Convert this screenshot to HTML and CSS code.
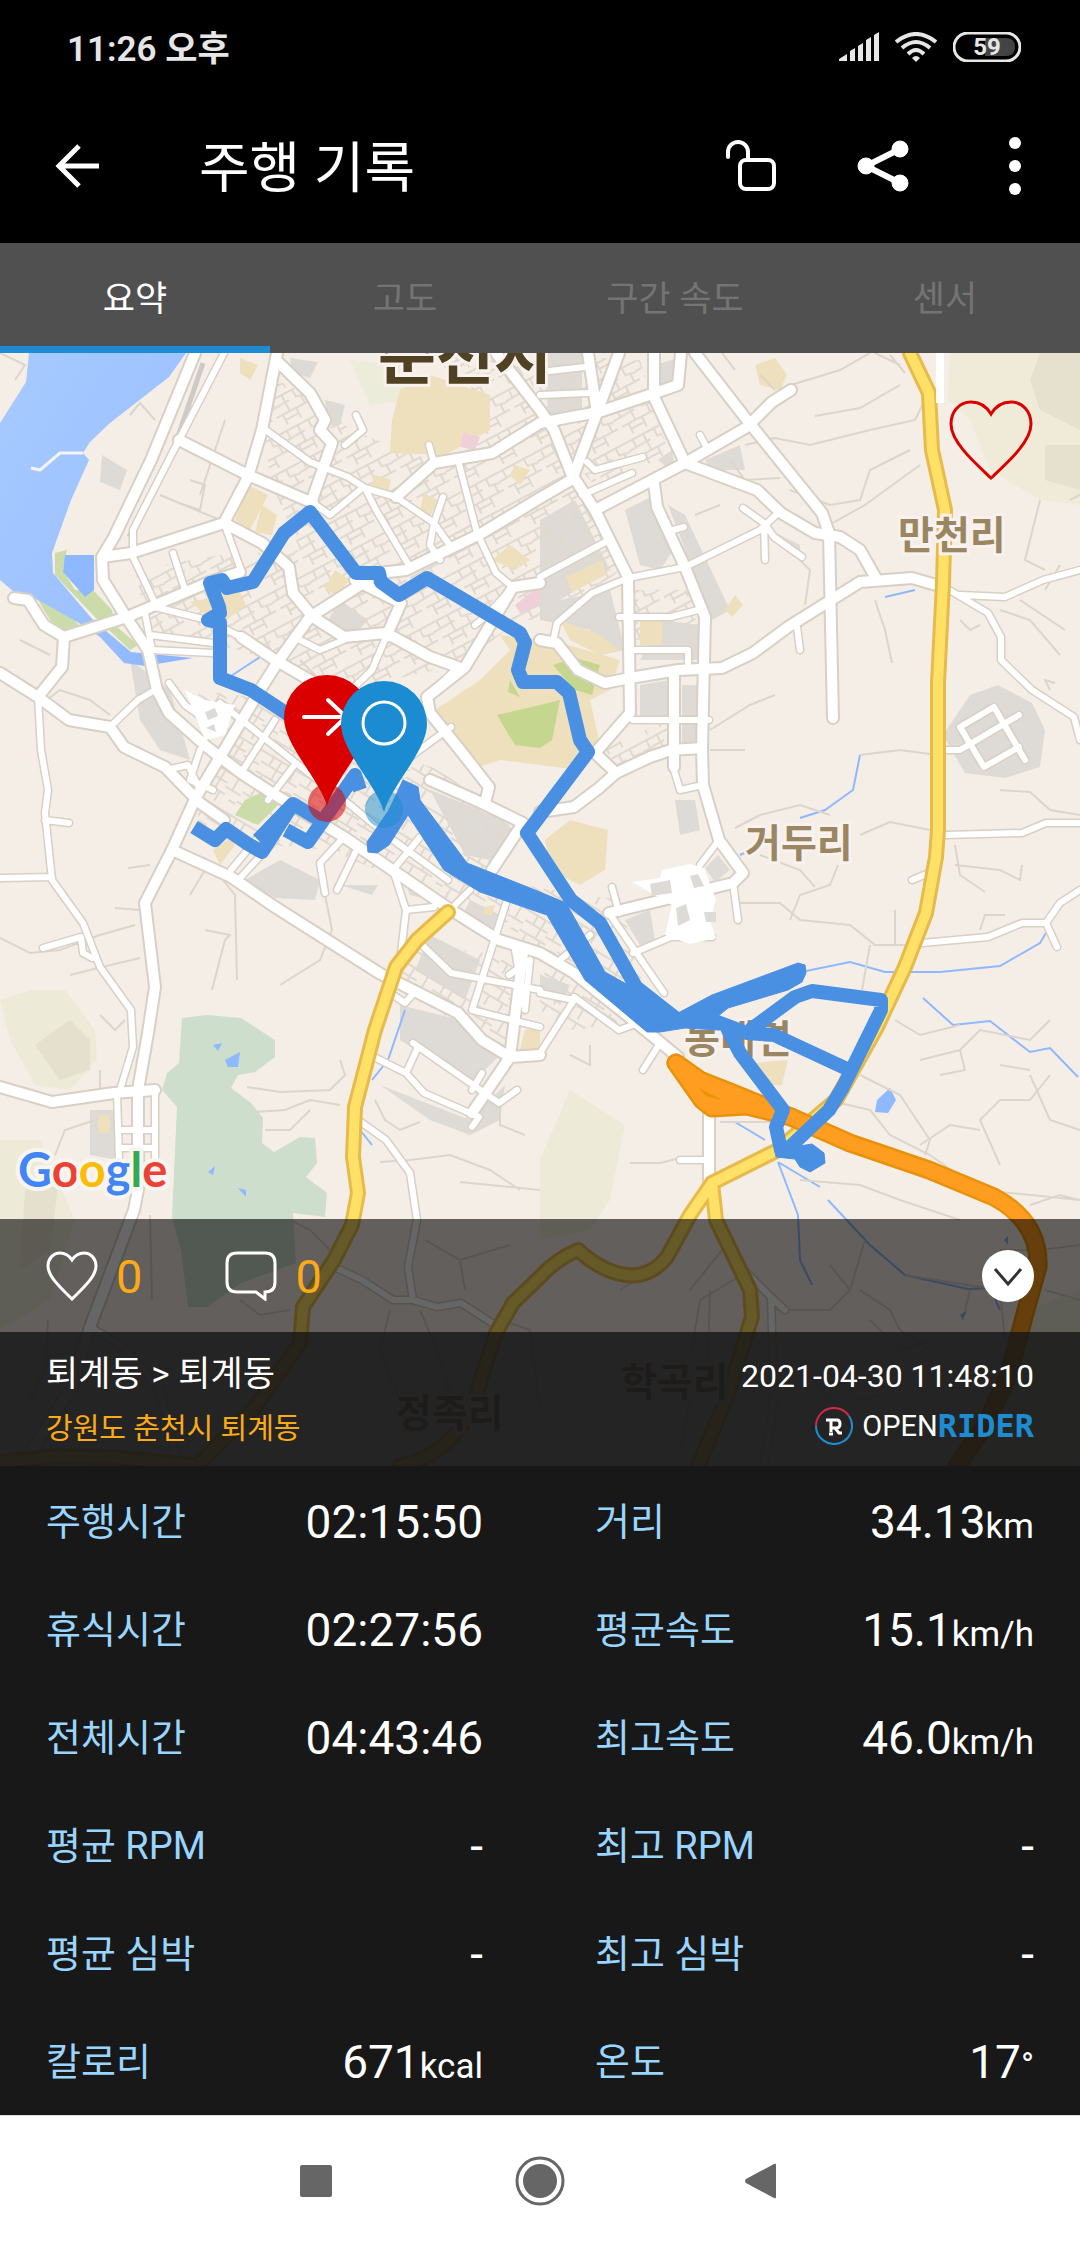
FILE: index.html
```html
<!DOCTYPE html>
<html lang="ko">
<head>
    <meta charset="UTF-8">
    <meta name="viewport" content="width=device-width, initial-scale=1.0">
    <title>주행 기록</title>
    <link rel="stylesheet" href="styles.css">
</head>
<body>

    <div class="status-bar">
        <span class="clock">11:26 오후</span>
        <div class="status-icons">
            <svg width="40" height="30" viewBox="0 0 40 30" fill="#e6e6e6">
                <path d="M0 27 8 22V29H0ZM11 19 16 16V29H11ZM19 14 24 11V29H19ZM27 8 32 5V29H27ZM35 3 40 0V29H35Z"/>
            </svg>
            <svg width="42" height="30" viewBox="0 0 42 30" fill="none" stroke="#e6e6e6" stroke-width="4">
                <path d="M1 10Q21-6 41 10M7 16Q21 4 35 16M13 22Q21 14 29 22"/>
                <path d="M17 26Q21 22 25 26L21 30Z" fill="#e6e6e6" stroke="none"/>
            </svg>
            <svg class="battery" width="68" height="30" viewBox="0 0 68 30">
                <path d="M32 6H53Q62 6 62 15T53 24H32Z" fill="#444"/>
                <rect x="1" y="1" width="66" height="28" rx="14" fill="none" stroke="#e6e6e6" stroke-width="3"/>
                <text x="34" y="23" text-anchor="middle">59</text>
            </svg>
        </div>
    </div>

    <header class="app-bar">
        <button type="button" class="icon-btn" aria-label="뒤로">
            <svg width="44" height="44" viewBox="0 0 44 44" fill="none" stroke="#fff" stroke-width="5">
                <path d="M24 2 4 22 24 42M3 22H44"/>
            </svg>
        </button>
        <h1>주행 기록</h1>
        <div class="app-actions">
            <button type="button" class="icon-btn" aria-label="공개">
                <svg width="50" height="52" viewBox="0 0 50 52" fill="none" stroke="#fff" stroke-width="4" stroke-linecap="round">
                    <path d="M2 17V12A10 10 0 0 1 22 12V20"/>
                    <rect x="14" y="20" width="34" height="29" rx="6"/>
                </svg>
            </button>
            <button type="button" class="icon-btn" aria-label="공유">
                <svg width="52" height="52" viewBox="0 0 52 52" fill="#fff" stroke="#fff">
                    <path d="M43 9 9 26 43 43" fill="none" stroke-width="6"/>
                    <circle cx="43" cy="9" r="8"/>
                    <circle cx="9" cy="26" r="8"/>
                    <circle cx="43" cy="43" r="8"/>
                </svg>
            </button>
            <button type="button" class="icon-btn" aria-label="더보기">
                <svg width="12" height="60" viewBox="0 0 12 60" fill="#fff">
                    <circle cx="6" cy="7" r="6"/>
                    <circle cx="6" cy="30" r="6"/>
                    <circle cx="6" cy="53" r="6"/>
                </svg>
            </button>
        </div>
    </header>

    <nav class="tabs">
        <button type="button" class="tab active">요약</button>
        <button type="button" class="tab">고도</button>
        <button type="button" class="tab">구간 속도</button>
        <button type="button" class="tab">센서</button>
    </nav>

    <section class="map">
        <svg class="map-canvas" viewBox="0 353 1080 1113">
            <defs>
                <linearGradient id="lake" x1="0" y1="0" x2="1" y2="1">
                    <stop offset="0" stop-color="#a6caff"/>
                    <stop offset="0.6" stop-color="#9dc2ff"/>
                    <stop offset="1" stop-color="#8ab4ff"/>
                </linearGradient>
                <pattern id="blocks" width="43" height="34" patternUnits="userSpaceOnUse" patternTransform="rotate(-28)">
                    <path d="M0 5H43M0 14 24 13M5 23H43M8 5V14M20 5V23M32 5V13L43 15M12 23V34M27 23V34M37 15V23M12 29H27" fill="none" stroke="#dfd9d0" stroke-width="2"/>
                </pattern>
                <pattern id="blocks-south" width="44" height="36" patternUnits="userSpaceOnUse" patternTransform="rotate(31)">
                    <path d="M0 4H44M0 14H26M9 4V14M18 4V24M34 4V18M26 18H44M0 25H30M24 25V36M8 25V36M36 28H44" fill="none" stroke="#dfd9d0" stroke-width="2"/>
                </pattern>

                <!-- wide streets -->
                <g id="streets-wide">
                    <path d="M195 353 151 460 114 537 102 557 103 580 126 617 148 650 157 690 169 713 207 747 241 773 272 793 344 837 448 908 499 940 540 953 574 973 633 1020 678 1057"/>
                    <path d="M277 353 262 430 248 477 224 523 131 553 103 557"/>
                    <path d="M179 440 248 475 313 503M279 363 310 393 325 420 320 430 332 443 312 500"/>
                    <path d="M571 480 540 498 482 533 406 570 379 573 310 617 279 660 260 690 220 757 196 797 172 850 145 903 155 987 148 1033 138 1090 138 1190 134 1210 90 1327 72 1387 34 1447"/>
                    <path d="M540 583 513 587 465 667 427 697 430 713 460 750 489 787 485 803"/>
                    <path d="M496 353 540 410 554 430 571 473 595 510 628 577 630 713 595 753 616 773 599 788 574 807 540 812"/>
                    <path d="M14 598 28 600 44 625 64 637 127 617 207 583 240 572M64 637 62 667 38 697 0 673M38 697 69 720 110 727 124 747 165 767 200 803 224 820"/>
                    <path d="M224 523 262 543 289 567 293 593 313 617 344 637 386 633 430 657 458 667"/>
                    <path d="M434 463 492 453 540 423 571 417 599 412 655 393 678 385 681 353M396 497 434 463"/>
                    <path d="M588 353 597 413 573 477M619 353 597 413M654 353 654 397 685 463 757 490 781 513 815 533 840 537 860 550 877 580"/>
                    <path d="M695 353 747 420 822 513 829 533 833 718"/>
                    <path d="M595 510 685 463 747 427 772 402 791 390M654 483 657 507 685 567 705 617 702 750 703 785 719 840 743 873 733 883 609 913"/>
                    <path d="M540 640 557 643 578 670 605 683 630 678 678 670 722 668 753 653 788 627 860 582 912 578 936 585"/>
                    <path d="M616 773 650 757 671 750 702 748M674 677 674 767"/>
                    <path d="M172 850 231 877 275 907 379 973 458 1013 482 1040 510 1057 540 1055"/>
                    <path d="M0 1087 52 1102 114 1093 155 1090"/>
                    <path d="M430 780 482 803 523 823 492 870M241 637 275 660 327 690 360 720"/>
                    <path d="M523 953 510 1057 472 1113M709 1103 709 1180"/>
                    <path d="M355 580 401 603 386 637"/>
                </g>

                <!-- narrow streets -->
                <g id="streets">
                    <path d="M224 353 179 440 133 530 133 557 155 603M173 553 185 590 207 583M224 523 241 570M263 428 310 462 348 477 365 488 396 497 434 523 451 547"/>
                    <path d="M365 488 376 510 410 567M458 460 477 533 496 573 513 587 487 615 475 625M434 523 430 545 440 560M313 503 330 515 360 490M345 445 363 430 356 415M434 463 429 445M443 497 434 523"/>
                    <path d="M145 613 152 650 213 653M150 635 213 643M155 607 207 620 241 637M386 637 372 670 344 697M300 640 320 650 344 640M458 667 427 697"/>
                    <path d="M110 727 138 700 155 690M38 697 41 750 48 790 45 813 52 880 83 923 100 967 131 1010 133 1047 120 1090M0 878 52 877M45 820 69 823M43 948 81 937 83 953 92 958"/>
                    <path d="M220 703 296 763 344 800 389 837 448 880M169 683 185 705 220 730M241 773 275 720M296 763 268 800M410 757 451 727M200 750 190 780 213 790M166 770 188 765 200 790"/>
                    <path d="M540 577 609 540M628 578 685 567 760 530 778 513M743 508 764 523 774 537 802 557M764 523 765 560M554 637 557 623 592 593 628 578M619 617 671 617 698 610M633 650 688 650 688 668M633 720 709 720M673 530 684 527M540 395 588 393M540 372 585 367M587 462 595 470 643 457M582 495 632 473M797 627 800 650M700 435 708 450"/>
                    <path d="M946 588 988 613 1001 637 1001 660 1032 690 1074 717 1080 740M960 595 1005 597 1043 580 1080 570"/>
                    <path d="M943 750 960 750 1019 715M960 727 994 707 1025 760M960 727 984 767 1019 747"/>
                    <path d="M420 943 451 973 540 990M506 903 472 1010 540 1027M374 1057 406 1073 424 1093 479 1117 472 1127M413 1043 499 1103 517 1090M418 1047 406 1073M482 1073 472 1090M393 995 405 1003 412 995"/>
                    <path d="M358 1120 386 1140 410 1173 417 1220 408 1267 413 1300 393 1300 362 1280 334 1267M413 1300 437 1307 461 1303 492 1323"/>
                    <path d="M117 1093 119 1160M155 1090 155 1160M119 1130 155 1130M119 1148 155 1148M355 853 337 890M320 863 325 893M393 870 406 910 401 953M406 910 434 907M393 870 420 837M241 877 275 840M231 870 260 835M320 863 344 837"/>
                    <path d="M574 997 619 1030 633 1025M540 993 574 1000 540 1053M660 1043 643 1070M609 913 664 993M612 887 619 913M633 953 671 937 712 937M733 883 738 920M719 840 700 865M674 770 680 790 703 785M560 960 590 935M709 1160 680 1160"/>
                    <path d="M946 835 1022 833 1046 823 1080 823M922 943 988 937 1022 923 1046 923 1060 903 1080 890M1046 923 1057 947M912 880 929 873"/>
                    <path d="M747 1273 771 1297 774 1400 764 1466M771 1297 785 1310M90 1327 124 1347 160 1390 178 1466M509 975 530 960 525 1010 515 950M470 890 448 912 460 900"/>
                </g>

                <!-- yellow trunk roads -->
                <g id="trunk">
                    <path d="M910 353 929 393 932 450 945 510 943 583 938 683 938 830 936 857 926 913 905 967 877 1027 836 1100 778 1150 712 1183 690 1215 667 1257Q650 1278 626 1275T578 1250Q555 1260 540 1277L513 1303 496 1333 472 1407Q450 1455 400 1466"/>
                    <path d="M712 1183 716 1220 750 1290 752 1317 726 1400 698 1466"/>
                    <path d="M448 912 417 940 396 967 375 1030 355 1107 353 1157 358 1193 352 1225 334 1260 303 1307 300 1343 255 1407 200 1463M0 1462 60 1456 120 1458 200 1466"/>
                </g>

                <g id="motorway">
                    <path d="M676 1063 702 1100 712 1108 747 1106 791 1117 850 1143 929 1170 994 1197Q1040 1222 1038 1267L1026 1310 1008 1377 984 1427 957 1466"/>
                    <path d="M676 1063 700 1080 733 1093 791 1117M690 1075 705 1096 735 1102"/>
                </g>
            </defs>

            <rect y="353" width="1080" height="1113" fill="#f5eee7"/>

            <!-- hills -->
            <path d="M950 353H1080V505L1040 500 990 470 970 420 948 400Z" fill="#efebd8"/>
            <path d="M1040 353H1080V430L1040 410 1030 380ZM1045 445H1080V490L1045 480Z" fill="#e6e1cf"/>
            <path d="M0 1000 30 990 65 990 95 1030 97 1060 70 1090 35 1085 10 1040ZM0 1140 40 1140 75 1220 50 1300 0 1330ZM570 1090 625 1125 610 1200 590 1230 540 1240 540 1160Z" fill="#eeead8"/>
            <path d="M35 1045 70 1020 90 1040 90 1070 60 1080ZM25 1190 60 1170 50 1250 20 1270Z" fill="#e5e0ce"/>
            <path d="M350 360 400 365 410 400 370 405ZM1026 1310 1080 1290V1466H970L1008 1377Z" fill="#ebecd9"/>

            <!-- built-up ground -->
            <path class="ground" d="M102 455 127 470 120 490 100 482ZM290 358 318 362 310 378 292 372ZM325 400 345 405 340 425 328 425ZM340 600 368 620 350 640 325 625ZM545 353 582 353V415H548ZM655 365 678 358 672 385 658 390ZM540 520 575 500 610 570 560 600 610 590 625 650 600 655 590 630 540 620ZM625 510 655 495 680 540 660 570 640 565ZM668 505 685 515 730 610 712 620ZM658 460 672 450 676 475ZM705 460 740 445 745 470 712 470ZM770 530 800 560 800 545ZM660 620 700 625V660H640ZM640 685 670 680V718H640ZM682 685 700 685V750H682ZM943 735 970 695 998 685 1032 703 1045 730 1040 767 1005 778 965 773Z"/>
            <path class="ground" d="M430 790 480 810 515 830 490 860 465 855ZM245 880 280 860 320 880 315 900 275 898ZM340 885 378 885 372 895ZM400 870 448 900 430 900 410 895ZM470 900 500 915 490 935 460 920ZM400 1005 460 1020 500 1055 470 1085 400 1040ZM380 1085 470 1120 505 1085 500 1120 470 1135 430 1120ZM90 1110 118 1110 118 1160 90 1155ZM540 975 570 985 560 1005 540 990ZM625 920 650 910 655 940 640 945ZM675 800 695 800 700 830 680 835ZM430 935 480 960 465 1000 415 970ZM130 660 170 690 190 760 160 750 140 720Z"/>
            <path fill="url(#blocks)" d="M265 375 320 400 350 430 430 460 540 430 595 500 620 570 560 620 520 620 460 665 340 690 240 650 150 640 135 570 220 555 300 550 270 480 265 430Z"/>
            <path fill="url(#blocks)" d="M440 355H540L640 360 650 390 590 470 530 440 440 450ZM632 590H690L700 640H635ZM600 750 668 720V750L620 770ZM590 400 650 400 670 455 600 490 580 470Z"/>
            <path fill="url(#blocks-south)" d="M190 690 280 700 350 740 440 770 520 830 490 880 620 900 650 1010 540 950 400 880 330 850 270 845 200 830 195 790 230 750ZM400 940 530 960 505 1050 400 990ZM540 960 600 1000 620 1025 570 1030 540 1010Z"/>

            <!-- schools, parks, hospitals -->
            <path fill="#eedfbd" d="M400 390 430 375 490 395 490 430 445 455 390 453 392 420ZM248 485 268 495 250 530 235 520ZM262 505 277 515 272 535 255 532ZM375 475 391 480 388 492 370 490ZM424 493 437 500 430 517 420 510ZM240 358 258 365 250 380 240 373ZM515 465 530 470 520 485 510 475ZM510 545 530 560 515 570 492 560ZM190 602 240 592 246 605 220 625ZM335 570 350 580 335 595 325 588ZM500 635 550 640 620 660 610 690 590 700 600 745 580 770 500 760 470 770 435 710 480 680 510 650ZM566 577 602 560 606 575 572 592ZM640 620H662V645H640ZM725 610 735 595 743 605 732 617ZM755 365 775 358 787 375 780 390 760 385ZM545 840 570 820 608 830 605 870 580 885 550 870ZM755 1063 788 1060 782 1085 768 1085ZM525 1030 540 1027V1050L520 1050ZM213 850 230 838 235 845 220 865ZM98 1115H110V1133H98ZM484 907 495 905 492 915 483 915ZM560 620 600 635 620 650 600 655 570 640Z"/>
            <path fill="#cbdcaa" d="M55 553 67 550 63 570 75 590 93 590 112 610 115 625 138 645 130 650 93 615 55 575ZM38 600 60 605 79 625 64 635 50 620ZM245 800 260 793 280 803 258 825 235 815Z"/>
            <path fill="#c5d78f" d="M497 715 540 705 560 700 552 740 540 748 515 745ZM553 665 575 658 600 665 592 695 575 690ZM510 680 520 697 508 692Z"/>
            <path fill="#efd0d8" d="M463 433 480 437 475 450 460 447ZM540 585 515 605 520 613 540 605Z"/>
            <path fill="#cddecc" d="M182 1018 207 1015 241 1018 275 1040 275 1057 255 1072 238 1075 231 1088 251 1103 263 1118 262 1143 274 1152 300 1137 315 1138 317 1163 306 1177 327 1193 325 1217 293 1213 296 1263 241 1283 207 1307 188 1307 181 1250 172 1217 177 1107 162 1090 167 1073 179 1063Z"/>

            <!-- water -->
            <path fill="url(#lake)" d="M29 353H186L169 377 110 423 90 442 83 453 89 460 71 500 52 553 53 573 93 620 131 652 193 658 145 666 124 663 100 637 79 623 38 600 14 592 0 580V423L26 382Z"/>
            <path fill="#8eb8ff" d="M65 555H94V590L85 597 63 572ZM225 1060 240 1052 238 1067 228 1067ZM213 1045 222 1043 218 1051ZM208 1172 215 1166 213 1175ZM238 1188 246 1190 246 1197ZM877 1100 890 1088 896 1100 888 1113 875 1112ZM1004 1240 1008 1236 1008 1245ZM960 1315 967 1310 963 1320Z"/>
            <path class="stream" d="M806 971 850 962 885 972 940 972 1000 966 1040 943 1046 933M923 998 953 1025 990 1021 1030 1052 1050 1048 1078 1077M735 1122 765 1140M778 1162 820 1187M778 1162 798 1215 800 1260 812 1285M405 1010 388 1060 372 1080M885 597 915 590M860 755 853 790 825 810 800 818M228 678 260 657M828 1200 870 1245 905 1275 968 1289 990 1288 1000 1310M360 1130 372 1145M740 855 755 848"/>

            <!-- lanes -->
            <path class="lane" d="M0 353 25 365 15 380M130 415 140 403 155 420M225 420 200 495M160 495 220 520M190 480 205 485 200 510 185 505M40 705 60 690 90 700 110 715M20 640 50 655M190 895 205 870M215 870 235 895 237 980M205 930 230 935 225 940 212 990M325 895 332 930 320 960 280 985M150 865 128 868M140 910 115 908M135 925 100 935 60 950 30 953 0 938M140 958 90 970 70 975M300 660 330 690M100 1015 115 1030 125 1020"/>
            <path class="lane" d="M247 1087 280 1092 330 1090 345 1075 340 1060M255 1112 285 1110 310 1100 340 1105M265 1130 290 1130 310 1110M380 1162 410 1160 450 1155 490 1170 520 1190M540 1190 460 1182M500 1110 500 1125 525 1135M375 1100 385 1120 400 1130 420 1122M55 1155 65 1130 95 1120M100 1070 100 1095M48 1320 45 1370 30 1400M150 1215 152 1300M240 1300 260 1315 290 1310M290 1220 310 1230 330 1250"/>
            <path class="lane" d="M791 385 840 370 870 353M745 445 775 438 810 445 870 430 915 420 925 400M815 416 860 408 900 385M790 490 830 505 860 500 870 470 910 450M820 530 865 505 920 465M720 350 735 370M730 460 745 480 780 478M695 515 720 505M775 390 760 375M875 353 900 365M905 373 890 355M1040 500 1025 560 1045 570M1070 500 1080 495M1060 565 1045 590M875 600 885 630 892 663M1000 610 1030 620 1060 655M1020 600 1050 620 1065 630M960 620 970 630 980 625M710 730 750 705 775 695M710 750 745 750M805 605 810 570 800 560M860 755 900 750 938 755M1050 690 1045 680 1055 683"/>
            <path class="lane" d="M735 828 760 815 800 805 830 815M860 835 890 822 930 830M740 903 780 903 800 920 850 925 875 945 915 945M895 945V910M790 920 800 895 830 885 838 865M760 855 800 870 815 887M955 845 960 875 985 892M955 865 1000 870 1020 880 1022 865M1000 790 1030 792 1050 810 1080 815M870 945 862 990M980 930 985 915 1005 915M895 1020 920 1035 960 1025M920 1060 960 1050 980 1030 1030 1040 1050 1020M960 1050 965 1070 940 1075M1000 1065 1030 1070M1050 1075 1030 1100 1000 1100 980 1120 1000 1165M860 1075 900 1095 930 1140 925 1155M840 1103 870 1110 890 1135 930 1155 980 1190 1080 1200M920 1145 950 1125 980 1130M720 1122H780M630 1163 660 1163 680 1158M590 1045 590 1065 570 1055M800 1180 860 1185 900 1200 960 1220M1030 1205 1060 1195 1080 1200M1030 1075 1050 1120 1080 1130"/>
            <path class="lane" d="M690 1290 730 1240 720 1220M700 1300 690 1360M700 1300 750 1270M710 1290 708 1360M770 1310H830L850 1290 865 1240M850 1290 830 1265M860 1290 890 1310 900 1330 930 1350M870 1320 900 1350 930 1340M905 1275 1000 1290 1005 1340M970 1290 965 1310M1000 1250 1040 1250 1080 1245M1045 1290 1080 1300M830 1370 860 1400 880 1395M690 1400 680 1450M800 1365 830 1400M620 1290 650 1270M540 1410 530 1330 500 1320M425 1240 460 1260 510 1245M460 1260 465 1290M390 1310 380 1350 400 1400M420 1310 445 1370 450 1400"/>
            <path d="M203 363 170 460 129 537" fill="none" stroke="#cfcac6" stroke-width="5"/>
            <path d="M31 468 40 470 60 453 83 453" fill="none" stroke="#f5f3ef" stroke-width="3"/>

            <use href="#streets" class="road narrow-edge"/>
            <use href="#streets-wide" class="road wide-edge"/>
            <use href="#streets" class="road narrow"/>
            <use href="#streets-wide" class="road wide"/>
            <path d="M185 690 205 700 235 705 225 735 205 740 195 715ZM632 882 660 878 662 870 690 864 704 868 716 900 710 920 716 938 690 944 665 935 672 905Z" fill="#fff"/>
            <path d="M650 884 670 880 672 893 652 896ZM705 868 718 855 730 870 715 882ZM688 915 692 905M704 912H716V922H706ZM676 908 686 904 690 920 678 926ZM690 876 698 874 704 886 694 888ZM205 712 215 708 218 716 208 720ZM206 728 214 724 216 732Z" fill="#dedad5"/>
            <use href="#trunk" class="road trunk-edge"/>
            <use href="#trunk" class="road trunk"/>
            <path d="M940 353V403" fill="none" stroke="#fff" stroke-width="8"/>
            <use href="#motorway" class="road motorway-edge"/>
            <use href="#motorway" class="road motorway"/>
            <path d="M699 1088 706 1096 722 1100Z" fill="#e8920c"/>

            <g class="place">
                <text class="city" x="378" y="378">춘천시</text>
                <text x="898" y="549">만천리</text>
                <text x="745" y="857">거두리</text>
                <text x="684" y="1053">동내면</text>
                <text x="396" y="1427">정족리</text>
                <text x="621" y="1396">학곡리</text>
            </g>

            <!-- ridden route -->
            <g class="route">
                <path d="M320 738 286 713 251 690 220 678V623L208 620 220 613 219 607 210 583 222 580 227 588 253 582 284 533 310 512 356 573H379L381 582 399 595 427 578 520 633 525 643 518 670 523 682H557L569 693 580 740 588 752 527 833 571 900 600 923 636 987 678 1020"/>
                <path d="M194 827 215 840 226 829 248 844 262 852 293 804 320 820M258 840 293 804M286 830 308 842 355 775 360 790"/>
                <path class="route-area" d="M403 780 418 787 420 800 467 863 540 892 566 903 605 972 678 1013 712 995 798 963 805 965 806 973 802 982 788 990 728 1008 717 1017 740 1026 718 1030 685 1028 660 1032H647L585 980 547 915 480 892 444 870 408 815 389 845 377 853 368 852 367 842 389 810Z"/>
                <path d="M690 1020 712 1020 747 1033 774 1035 845 1068M750 1030 795 997 812 991 881 1000V1010L843 1087 829 1110 790 1147 781 1150 776 1127 783 1110 740 1053 727 1028"/>
                <path class="route-area" d="M775 1150 800 1146 812 1144 824 1153 825 1163 810 1172 800 1167 795 1159 776 1157Z"/>
            </g>

            <!-- finish and start pins -->
            <circle cx="327" cy="803" r="19" fill="#da0000" fill-opacity="0.55"/>
            <path d="M327 806C320 780 284 745 284 718A43 43 0 0 1 370 718C370 745 334 780 327 806Z" fill="#da0000"/>
            <path d="M304 717H345M328 700 346 717 328 734" fill="none" stroke="#fff" stroke-width="4" stroke-linecap="round"/>
            <circle cx="384" cy="809" r="19" fill="#1c8cd2" fill-opacity="0.5"/>
            <path d="M384 812C377 786 341 751 341 724A43 43 0 0 1 427 724C427 751 391 786 384 812Z" fill="#1c8cd2"/>
            <circle cx="384" cy="723" r="21" fill="none" stroke="#fff" stroke-width="3"/>

            <text class="google" x="18" y="1187"><tspan fill="#4285f4">G</tspan><tspan fill="#ea4335">o</tspan><tspan fill="#fbbc05">o</tspan><tspan fill="#4285f4">g</tspan><tspan fill="#34a853">l</tspan><tspan fill="#ea4335">e</tspan></text>
        </svg>

        <button type="button" class="icon-btn favorite" aria-label="즐겨찾기">
            <svg width="84" height="80" viewBox="0 0 84 80" fill="none" stroke="#da0000" stroke-width="3">
                <path d="M42 14C36 4 28 2 22 2 10 2 2 12 2 24 2 42 26 63 42 78 58 63 82 42 82 24 82 12 74 2 62 2 56 2 48 4 42 14Z"/>
            </svg>
        </button>

        <div class="map-overlay">
            <div class="social">
                <button type="button" class="icon-btn count">
                    <svg width="52" height="50" viewBox="0 0 52 50" fill="none" stroke="#fff" stroke-width="3">
                        <path d="M26 9C22 3 18 2 14 2 7 2 2 8 2 15 2 26 16 38 26 48 36 38 50 26 50 15 50 8 45 2 38 2 34 2 30 3 26 9Z"/>
                    </svg>
                    <span>0</span>
                </button>
                <button type="button" class="icon-btn count">
                    <svg width="52" height="50" viewBox="0 0 52 50" fill="none" stroke="#fff" stroke-width="3">
                        <path d="M12 2H40Q50 2 50 12V31Q50 41 40 41V48L31 41H12Q2 41 2 31V12Q2 2 12 2Z"/>
                    </svg>
                    <span>0</span>
                </button>
                <button type="button" class="icon-btn collapse" aria-label="접기">
                    <svg width="52" height="52" viewBox="0 0 52 52">
                        <circle cx="26" cy="26" r="26" fill="#fff"/>
                        <path d="M13 19 26 34 39 19" fill="none" stroke="#333" stroke-width="3"/>
                    </svg>
                </button>
            </div>
            <div class="ride-info">
                <div>
                    <div class="ride-title">퇴계동 &gt; 퇴계동</div>
                    <div class="ride-address">강원도 춘천시 퇴계동</div>
                </div>
                <div class="ride-meta">
                    <time class="ride-date">2021-04-30 11:48:10</time>
                    <div class="brand">
                        <svg width="38" height="38" viewBox="0 0 38 38" fill="none" stroke-width="2">
                            <path d="M1 19A18 18 0 0 1 34 9" stroke="#d0274b"/>
                            <path d="M34 9A18 18 0 1 1 1 19" stroke="#1e8cd2"/>
                            <path d="M11 13H22Q25 13 25 17T21 21H16V25M14 27H18M16 14V25M20 21 24 26H27" stroke="#fff" stroke-width="3"/>
                        </svg>
                        <span class="brand-open">OPEN</span><span class="brand-rider">RIDER</span>
                    </div>
                </div>
            </div>
        </div>
    </section>

    <dl class="stats">
        <div class="stat"><dt>주행시간</dt><dd>02:15:50</dd></div>
        <div class="stat"><dt>거리</dt><dd>34.13<small>km</small></dd></div>
        <div class="stat"><dt>휴식시간</dt><dd>02:27:56</dd></div>
        <div class="stat"><dt>평균속도</dt><dd>15.1<small>km/h</small></dd></div>
        <div class="stat"><dt>전체시간</dt><dd>04:43:46</dd></div>
        <div class="stat"><dt>최고속도</dt><dd>46.0<small>km/h</small></dd></div>
        <div class="stat"><dt>평균 RPM</dt><dd>-</dd></div>
        <div class="stat"><dt>최고 RPM</dt><dd>-</dd></div>
        <div class="stat"><dt>평균 심박</dt><dd>-</dd></div>
        <div class="stat"><dt>최고 심박</dt><dd>-</dd></div>
        <div class="stat"><dt>칼로리</dt><dd>671<small>kcal</small></dd></div>
        <div class="stat"><dt>온도</dt><dd>17<small>°</small></dd></div>
    </dl>

    <nav class="system-nav">
        <button type="button" class="icon-btn" aria-label="최근 앱">
            <svg width="32" height="32" viewBox="0 0 32 32"><rect width="32" height="32" rx="2" fill="#666"/></svg>
        </button>
        <button type="button" class="icon-btn" aria-label="홈">
            <svg width="50" height="50" viewBox="0 0 50 50">
                <circle cx="25" cy="25" r="23" fill="none" stroke="#666" stroke-width="3"/>
                <circle cx="25" cy="25" r="17" fill="#666"/>
            </svg>
        </button>
        <button type="button" class="icon-btn" aria-label="뒤로 가기">
            <svg width="38" height="36" viewBox="0 0 38 36"><path d="M31 2V34Q31 36 29 35L1 20Q-1 18 1 16L29 1Q31 0 31 2Z" fill="#666"/></svg>
        </button>
    </nav>

</body>
</html>
```

FILE: styles.css
```css
* {
    box-sizing: border-box;
}

body {
    margin: 0;
    background-color: #181818;
    color: #fff;
    font-family: Roboto, "Noto Sans CJK KR", sans-serif;
}

svg {
    display: block;
}

.icon-btn {
    display: flex;
    align-items: center;
    justify-content: center;
    padding: 0;
    border: none;
    background: none;
    color: inherit;
    font: inherit;
    cursor: pointer;
}

/* status bar */
.status-bar {
    display: flex;
    align-items: center;
    justify-content: space-between;
    height: 94px;
    padding: 0 59px 0 67px;
    background-color: #000;
    color: #e6e6e6;
}

.clock {
    padding-bottom: 4px;
    font-size: 35px;
    font-weight: 600;
}

.status-icons {
    display: flex;
    align-items: center;
    gap: 16px;
}

.battery text {
    fill: #e6e6e6;
    font-size: 24px;
    font-weight: 700;
}

/* app bar */
.app-bar {
    display: flex;
    align-items: center;
    height: 149px;
    padding: 0 59px 5px 55px;
    background-color: #000;
}

.app-bar h1 {
    margin: 0 0 0 100px;
    padding-top: 3px;
    font-size: 55px;
    font-weight: 400;
    line-height: 80px;
}

.app-actions {
    display: flex;
    align-items: center;
    gap: 81px;
    margin-left: auto;
}

.app-actions .icon-btn:last-child {
    margin-left: 19px;
}

/* tabs */
.tabs {
    display: flex;
    background-color: #505050;
}

.tab {
    flex: 1;
    height: 110px;
    padding: 1px 0 0;
    border: none;
    border-bottom: 7px solid transparent;
    background: none;
    color: #747474;
    font-family: inherit;
    font-size: 35px;
    cursor: pointer;
}

.tab.active {
    border-bottom-color: #1e8cd2;
    color: #fff;
}

/* map */
.map {
    position: relative;
}

.map-canvas {
    width: 100%;
    height: auto;
}

.ground {
    fill: #dedad5;
}

.stream {
    fill: none;
    stroke: #8eb8ff;
    stroke-width: 2;
}

.lane {
    fill: none;
    stroke: #dcd5cb;
    stroke-width: 2;
}

.road {
    fill: none;
    stroke-linecap: round;
    stroke-linejoin: round;
}

.narrow-edge {
    stroke: #d8cfc5;
    stroke-width: 9;
}

.narrow {
    stroke: #fff;
    stroke-width: 6;
}

.wide-edge {
    stroke: #d8cfc5;
    stroke-width: 14;
}

.wide {
    stroke: #fff;
    stroke-width: 10;
}

.trunk-edge {
    stroke: #e6bb4c;
    stroke-width: 16;
}

.trunk {
    stroke: #ffe168;
    stroke-width: 10;
}

.motorway-edge {
    stroke: #e8920c;
    stroke-width: 19;
}

.motorway {
    stroke: #ff9d20;
    stroke-width: 14;
}

.place {
    fill: #9a8661;
    stroke: #f8f1ee;
    stroke-width: 6;
    paint-order: stroke;
    font-size: 39px;
    font-weight: 700;
}

.city {
    fill: #4f4122;
    font-size: 63px;
}

.route {
    fill: none;
    stroke: #4a90e2;
    stroke-width: 14;
    stroke-linejoin: round;
}

.route-area {
    fill: #4a90e2;
    stroke-width: 1;
}

.google {
    stroke: #f8f5f0;
    stroke-width: 8;
    stroke-linejoin: round;
    paint-order: stroke;
    font-family: Lato, sans-serif;
    font-size: 47px;
    font-weight: 700;
}

.favorite {
    position: absolute;
    top: 47px;
    right: 47px;
}

.map-overlay {
    position: absolute;
    right: 0;
    bottom: 0;
    left: 0;
}

.social {
    display: flex;
    align-items: center;
    gap: 83px;
    height: 113px;
    padding: 0 46px;
    background-color: rgba(0, 0, 0, 0.6);
}

.count {
    gap: 18px;
    color: #fbab18;
    font-size: 47px;
    line-height: 56px;
}

.count span {
    padding-top: 2px;
}

.collapse {
    margin-left: auto;
}

.ride-info {
    display: flex;
    justify-content: space-between;
    height: 134px;
    padding: 16px 46px;
    background-color: rgba(20, 20, 20, 0.93);
}

.ride-title {
    font-size: 35px;
    line-height: 54px;
}

.ride-address {
    color: #fbab18;
    font-size: 29px;
    line-height: 54px;
}

.ride-meta {
    display: flex;
    flex-direction: column;
    align-items: flex-end;
}

.ride-date {
    font-size: 32px;
    line-height: 56px;
}

.brand {
    display: flex;
    align-items: center;
    height: 44px;
}

.brand-open {
    margin-left: 9px;
    font-size: 29px;
}

.brand-rider {
    color: #1e8cd2;
    font-family: "DejaVu Sans Mono", monospace;
    font-size: 32px;
    font-weight: 700;
}

/* statistics */
.stats {
    display: grid;
    grid-template-columns: 1fr 1fr;
    column-gap: 110px;
    margin: 0;
    padding: 0 46px 1px;
}

.stat {
    display: flex;
    align-items: center;
    justify-content: space-between;
    height: 108px;
}

.stat:nth-child(odd) {
    padding-right: 2px;
}

.stat dt {
    padding-bottom: 3px;
    color: #99d5ff;
    font-size: 38px;
}

.stat dd {
    margin: 0;
    padding-top: 3px;
    font-size: 46px;
}

.stat small {
    font-size: 35px;
}

/* system navigation */
.system-nav {
    display: flex;
    justify-content: center;
    height: 131px;
    border-top: 1px solid #ddd;
    background-color: #fff;
}

.system-nav .icon-btn {
    width: 224px;
}
```
